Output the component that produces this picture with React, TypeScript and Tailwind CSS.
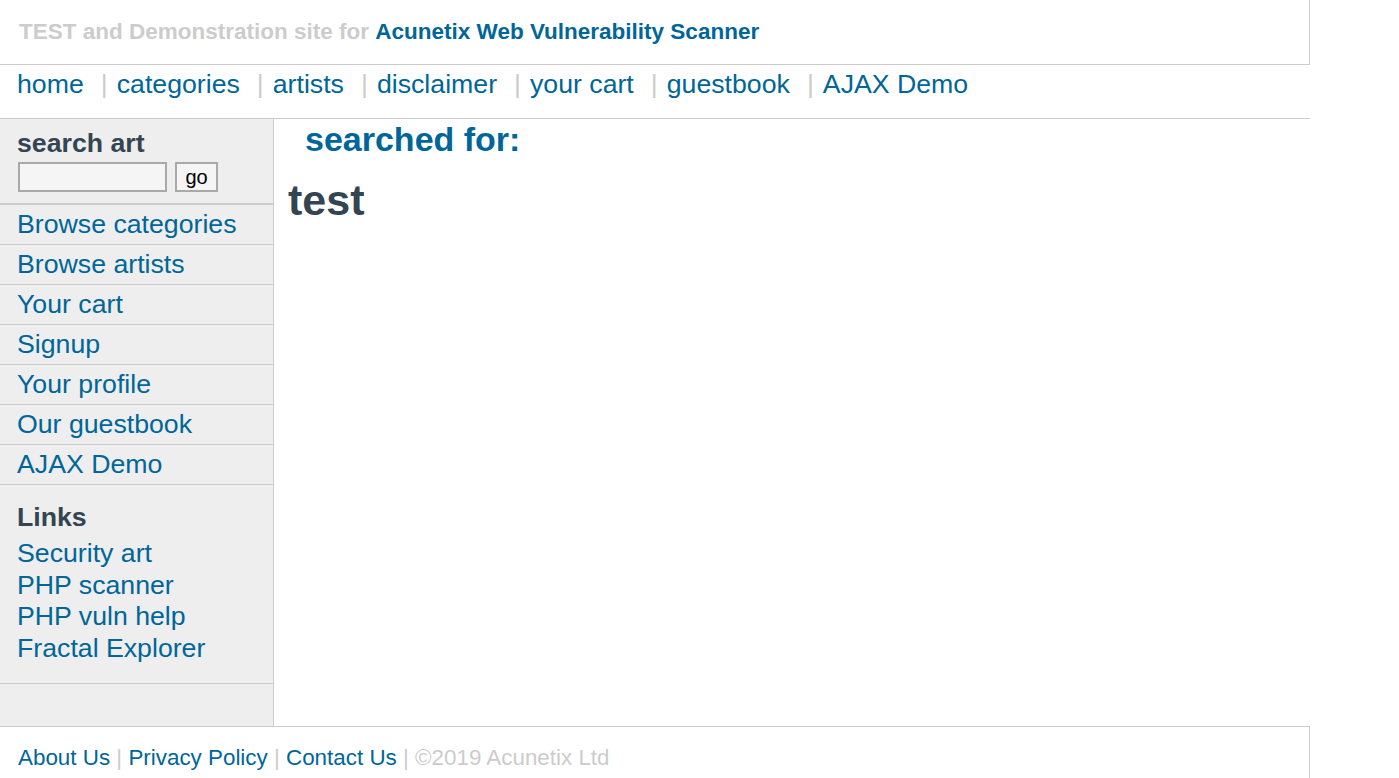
import React from "react";

const navItems = ["home", "categories", "artists", "disclaimer", "your cart", "guestbook", "AJAX Demo"];
const menuItems = ["Browse categories", "Browse artists", "Your cart", "Signup", "Your profile", "Our guestbook", "AJAX Demo"];
const linkItems = ["Security art", "PHP scanner", "PHP vuln help", "Fractal Explorer"];

export default function App() {
  return (
    <div className="w-[1310px] bg-white font-['Liberation_Sans',Arial,sans-serif]">
      <div className="flex h-[65px] items-center border-b border-r border-[#cccccc] pl-[19px] text-[22.5px] font-bold leading-normal">
        <span className="text-[#cccccc]">TEST and Demonstration site for&nbsp;</span>
        <span className="text-[#006699]">Acunetix Web Vulnerability Scanner</span>
      </div>

      <div className="flex h-[54px] items-start border-b border-[#cccccc] pl-[17px] pt-[5px] text-[26.7px] leading-[29px]">
        {navItems.map((item, i) => (
          <React.Fragment key={item}>
            {i > 0 && <span className="ml-[17px] mr-[9px] text-[#cccccc]">|</span>}
            <a className="text-[#006699]">{item}</a>
          </React.Fragment>
        ))}
      </div>

      <div className="flex h-[607px]">
        <div className="flex w-[274px] shrink-0 flex-col border-r border-[#cccccc] bg-[#eeeeee]">
          <div className="border-b-2 border-[#cccccc] pb-[11px] pl-[17px] pt-[4px]">
            <div className="text-[26.7px] font-bold leading-normal text-[#334550]">search art</div>
            <div className="-mt-[1px] flex items-center gap-[8px] pl-[1px]">
              <input className="h-[30px] w-[149px] border-2 border-[#a9a9a9] bg-[#f5f5f5] outline-none" />
              <button className="flex h-[30px] w-[43px] items-center justify-center border-2 border-[#a9a9a9] bg-[#f5f5f5] text-[20px] leading-none text-black">
                go
              </button>
            </div>
          </div>
          {menuItems.map((item) => (
            <div key={item} className="flex h-[40px] items-center border-b border-[#cccccc] pl-[17px]">
              <a className="-mt-[1px] text-[26.7px] leading-normal text-[#006699]">{item}</a>
            </div>
          ))}
          <div className="border-b border-[#cccccc] pb-[18.5px] pl-[17px] pt-[17px]">
            <div className="mb-[5px] text-[26.7px] font-bold leading-[31px] text-[#334550]">Links</div>
            {linkItems.map((item) => (
              <div key={item} className="text-[26.7px] leading-[31.7px] text-[#006699]">
                {item}
              </div>
            ))}
          </div>
          <div className="flex-1" />
        </div>

        <div className="flex-1 pl-[14px]">
          <h2 className="-mt-[5px] ml-[17px] text-[34px] font-bold leading-normal text-[#006699]">searched for:</h2>
          <h2 className="mt-[3px] text-[43px] font-bold leading-normal text-[#334550]">test</h2>
        </div>
      </div>

      <div className="h-[52px] border-r border-t border-[#cccccc] pl-[18px] pt-[13.5px] text-[22.4px] leading-normal">
        <a className="text-[#006699]">About Us</a>
        <span className="text-[#cccccc]"> | </span>
        <a className="text-[#006699]">Privacy Policy</a>
        <span className="text-[#cccccc]"> | </span>
        <a className="text-[#006699]">Contact Us</a>
        <span className="text-[#cccccc]"> | ©2019 Acunetix Ltd</span>
      </div>
    </div>
  );
}
